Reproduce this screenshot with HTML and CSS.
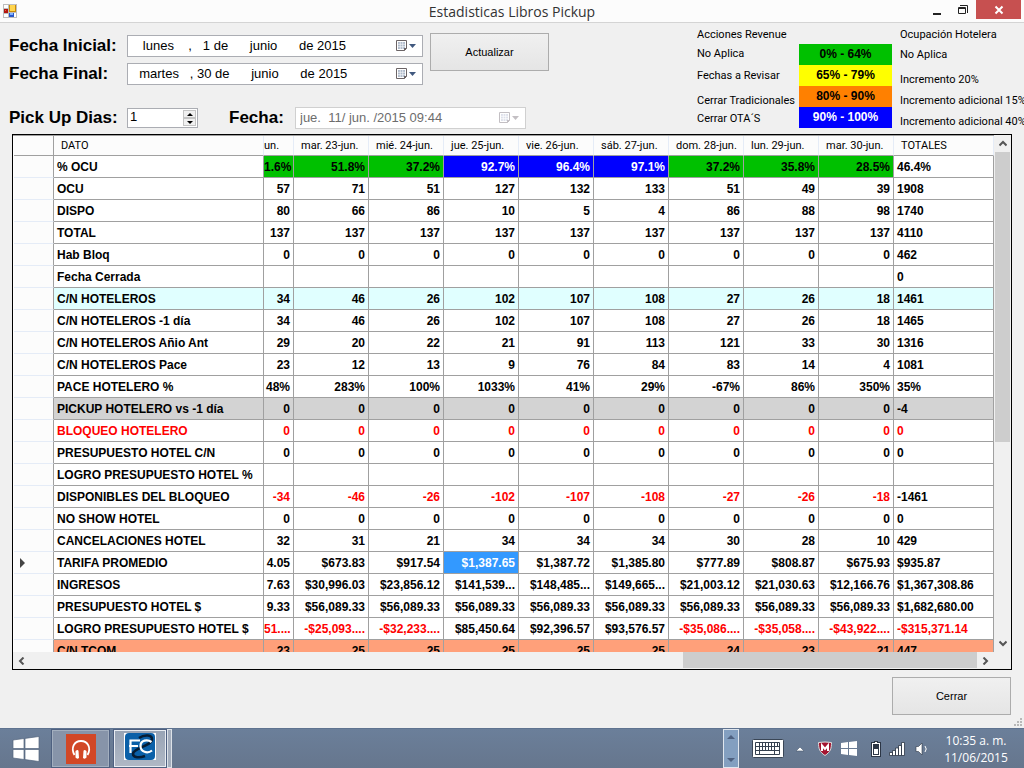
FILE: index.html
```html
<!DOCTYPE html>
<html lang="es">
<head>
<meta charset="utf-8">
<title>Estadisticas Libros Pickup</title>
<link rel="stylesheet" href="styles.css">
</head>
<body>
<header class="titlebar">
  <svg class="app-icon" width="14" height="14" viewBox="0 0 14 14"><path fill="#bdbdbd" d="M0 0h14v14H0z"/><path fill="#fff" d="M1 1h4v3H1zM1 10h4v3H1zM11 9h2v4h-2z"/><path fill="#b3160f" d="M1 5h4v4H1z"/><path fill="#f0604c" d="M2 6h1v1H2z"/><path fill="#c98a06" d="M6 1h7v7H6z"/><path fill="#ffd54f" d="M7 1h5v6H7z"/><path fill="#2856c8" d="M6 9h5v4H6z"/><path fill="#7fb0ff" d="M7 9h3v2H7z"/></svg>
  <h1 class="title">Estadisticas Libros Pickup</h1>
  <div class="window-controls">
    <button class="wc" aria-label="Minimizar"><svg width="10" height="12" viewBox="0 0 10 12"><path fill="#222" d="M1 9h8v2H1z"/></svg></button>
    <button class="wc" aria-label="Restaurar"><svg width="10" height="12" viewBox="0 0 10 12"><path fill="none" stroke="#222" d="M2 1.500h7.500V9M.5 3.500h7v6h-7zM.5 4.500h7"/></svg></button>
    <button class="wc wc-close" aria-label="Cerrar ventana"><svg width="10" height="10" viewBox="0 0 10 10"><path stroke="#fff" stroke-width="2" d="M1.500 1.500l7 7M8.500 1.500l-7 7"/></svg></button>
  </div>
</header>

<main class="window">
  <section class="top">
    <form class="filters">
      <div class="dates">
        <label class="lbl" for="ini">Fecha Inicial:</label>
        <div class="picker"><input id="ini" type="text" value="   lunes    ,   1 de      junio      de 2015"><button type="button" class="cal" aria-label="Calendario"><svg width="22" height="14" viewBox="0 0 22 14"><path fill="#fff" stroke="#6b6466" d="M1.500 1.500h10v8l-2 2h-8z"/><path fill="#aebaca" d="M3 3h7v7H3z"/><path stroke="#f4f6f8" stroke-width=".7" d="M3 5.300h7M3 7.700h7M5.300 3v7M7.700 3v7"/><path fill="#6b6466" d="M12 9l-3 3V9z"/><path fill="#41597f" d="M14 5h7l-3.500 4z"/></svg></button></div>
        <label class="lbl" for="fin">Fecha Final:</label>
        <div class="picker"><input id="fin" type="text" value="  martes   , 30 de      junio      de 2015"><button type="button" class="cal" aria-label="Calendario"><svg width="22" height="14" viewBox="0 0 22 14"><path fill="#fff" stroke="#6b6466" d="M1.500 1.500h10v8l-2 2h-8z"/><path fill="#aebaca" d="M3 3h7v7H3z"/><path stroke="#f4f6f8" stroke-width=".7" d="M3 5.300h7M3 7.700h7M5.300 3v7M7.700 3v7"/><path fill="#6b6466" d="M12 9l-3 3V9z"/><path fill="#41597f" d="M14 5h7l-3.500 4z"/></svg></button></div>
      </div>
      <button type="button" class="btn">Actualizar</button>
      <div class="pickup">
        <label class="lbl" for="dias">Pick Up Dias:</label>
        <div class="spin"><input id="dias" type="text" value="1"><div class="arrows"><button type="button" aria-label="Más"><svg width="6" height="3" viewBox="0 0 6 3"><path d="M0 3h6L3 0z"/></svg></button><button type="button" aria-label="Menos"><svg width="6" height="3" viewBox="0 0 6 3"><path d="M0 0h6L3 3z"/></svg></button></div></div>
        <label class="lbl lbl-fecha" for="fecha">Fecha:</label>
        <div class="picker picker-off"><input id="fecha" type="text" disabled value="jue.  11/ jun. /2015 09:44"><button type="button" class="cal" disabled aria-label="Calendario"><svg width="22" height="14" viewBox="0 0 22 14"><path fill="#fff" stroke="#c3bfc3" d="M1.500 1.500h10v8l-2 2h-8z"/><path fill="#dde0ea" d="M3 3h7v7H3z"/><path stroke="#fff" stroke-width=".7" d="M3 5.300h7M3 7.700h7M5.300 3v7M7.700 3v7"/><path fill="#c3bfc3" d="M12 9l-3 3V9zM14 5h7l-3.500 4z"/></svg></button></div>
      </div>
    </form>
    <div class="legend">
      <div class="leg-col leg-left"><span>Acciones Revenue</span><span>No Aplica</span><span>Fechas a Revisar</span><span>Cerrar Tradicionales</span><span>Cerrar OTA´S</span></div>
      <div class="ranges"><span class="green">0% - 64%</span><span class="yellow">65% - 79%</span><span class="orange">80% - 90%</span><span class="blue">90% - 100%</span></div>
      <div class="leg-col leg-right"><span>Ocupación Hotelera</span><span>No Aplica</span><span>Incremento 20%</span><span>Incremento adicional 15%</span><span>Incremento adicional 40%</span></div>
    </div>
  </section>

  <section class="grid">
    <div class="viewport">
      <table>
        <colgroup><col class="c-head"><col class="c-dato"><col class="c-part"><col span="8"><col class="c-total"></colgroup>
        <thead><tr><th></th><th>DATO</th><th>un.</th><th>mar. 23-jun.</th><th>mié. 24-jun.</th><th>jue. 25-jun.</th><th>vie. 26-jun.</th><th>sáb. 27-jun.</th><th>dom. 28-jun.</th><th>lun. 29-jun.</th><th>mar. 30-jun.</th><th>TOTALES</th></tr></thead>
        <tbody>
        <tr><th></th><td>% OCU</td><td class="green">1.6%</td><td class="green">51.8%</td><td class="green">37.2%</td><td class="blue">92.7%</td><td class="blue">96.4%</td><td class="blue">97.1%</td><td class="green">37.2%</td><td class="green">35.8%</td><td class="green">28.5%</td><td>46.4%</td></tr>
        <tr><th></th><td>OCU</td><td>57</td><td>71</td><td>51</td><td>127</td><td>132</td><td>133</td><td>51</td><td>49</td><td>39</td><td>1908</td></tr>
        <tr><th></th><td>DISPO</td><td>80</td><td>66</td><td>86</td><td>10</td><td>5</td><td>4</td><td>86</td><td>88</td><td>98</td><td>1740</td></tr>
        <tr><th></th><td>TOTAL</td><td>137</td><td>137</td><td>137</td><td>137</td><td>137</td><td>137</td><td>137</td><td>137</td><td>137</td><td>4110</td></tr>
        <tr><th></th><td>Hab Bloq</td><td>0</td><td>0</td><td>0</td><td>0</td><td>0</td><td>0</td><td>0</td><td>0</td><td>0</td><td>462</td></tr>
        <tr><th></th><td>Fecha Cerrada</td><td></td><td></td><td></td><td></td><td></td><td></td><td></td><td></td><td></td><td>0</td></tr>
        <tr class="cyan"><th></th><td>C/N HOTELEROS</td><td>34</td><td>46</td><td>26</td><td>102</td><td>107</td><td>108</td><td>27</td><td>26</td><td>18</td><td>1461</td></tr>
        <tr><th></th><td>C/N HOTELEROS -1 día</td><td>34</td><td>46</td><td>26</td><td>102</td><td>107</td><td>108</td><td>27</td><td>26</td><td>18</td><td>1465</td></tr>
        <tr><th></th><td>C/N HOTELEROS Añio Ant</td><td>29</td><td>20</td><td>22</td><td>21</td><td>91</td><td>113</td><td>121</td><td>33</td><td>30</td><td>1316</td></tr>
        <tr><th></th><td>C/N HOTELEROS Pace</td><td>23</td><td>12</td><td>13</td><td>9</td><td>76</td><td>84</td><td>83</td><td>14</td><td>4</td><td>1081</td></tr>
        <tr><th></th><td>PACE HOTELERO %</td><td>48%</td><td>283%</td><td>100%</td><td>1033%</td><td>41%</td><td>29%</td><td>-67%</td><td>86%</td><td>350%</td><td>35%</td></tr>
        <tr class="gray"><th></th><td>PICKUP HOTELERO vs -1 día</td><td>0</td><td>0</td><td>0</td><td>0</td><td>0</td><td>0</td><td>0</td><td>0</td><td>0</td><td>-4</td></tr>
        <tr class="red"><th></th><td>BLOQUEO HOTELERO</td><td>0</td><td>0</td><td>0</td><td>0</td><td>0</td><td>0</td><td>0</td><td>0</td><td>0</td><td>0</td></tr>
        <tr><th></th><td>PRESUPUESTO HOTEL C/N</td><td>0</td><td>0</td><td>0</td><td>0</td><td>0</td><td>0</td><td>0</td><td>0</td><td>0</td><td>0</td></tr>
        <tr><th></th><td>LOGRO PRESUPUESTO HOTEL %</td><td></td><td></td><td></td><td></td><td></td><td></td><td></td><td></td><td></td><td></td></tr>
        <tr><th></th><td>DISPONIBLES DEL BLOQUEO</td><td class="red">-34</td><td class="red">-46</td><td class="red">-26</td><td class="red">-102</td><td class="red">-107</td><td class="red">-108</td><td class="red">-27</td><td class="red">-26</td><td class="red">-18</td><td>-1461</td></tr>
        <tr><th></th><td>NO SHOW HOTEL</td><td>0</td><td>0</td><td>0</td><td>0</td><td>0</td><td>0</td><td>0</td><td>0</td><td>0</td><td>0</td></tr>
        <tr><th></th><td>CANCELACIONES HOTEL</td><td>32</td><td>31</td><td>21</td><td>34</td><td>34</td><td>34</td><td>30</td><td>28</td><td>10</td><td>429</td></tr>
        <tr><th><svg width="5" height="10" viewBox="0 0 5 10"><path fill="#444" d="M0 0v10l5-5z"/></svg></th><td>TARIFA PROMEDIO</td><td>4.05</td><td>$673.83</td><td>$917.54</td><td class="selected">$1,387.65</td><td>$1,387.72</td><td>$1,385.80</td><td>$777.89</td><td>$808.87</td><td>$675.93</td><td>$935.87</td></tr>
        <tr><th></th><td>INGRESOS</td><td>7.63</td><td>$30,996.03</td><td>$23,856.12</td><td>$141,539...</td><td>$148,485...</td><td>$149,665...</td><td>$21,003.12</td><td>$21,030.63</td><td>$12,166.76</td><td>$1,367,308.86</td></tr>
        <tr><th></th><td>PRESUPUESTO HOTEL $</td><td>9.33</td><td>$56,089.33</td><td>$56,089.33</td><td>$56,089.33</td><td>$56,089.33</td><td>$56,089.33</td><td>$56,089.33</td><td>$56,089.33</td><td>$56,089.33</td><td>$1,682,680.00</td></tr>
        <tr><th></th><td>LOGRO PRESUPUESTO HOTEL $</td><td class="red">51....</td><td class="red">-$25,093....</td><td class="red">-$32,233....</td><td>$85,450.64</td><td>$92,396.57</td><td>$93,576.57</td><td class="red">-$35,086....</td><td class="red">-$35,058....</td><td class="red">-$43,922....</td><td class="red">-$315,371.14</td></tr>
        <tr class="salmon"><th></th><td>C/N TCOM</td><td>23</td><td>25</td><td>25</td><td>25</td><td>25</td><td>25</td><td>24</td><td>23</td><td>21</td><td>447</td></tr>
        </tbody>
      </table>
    </div>
    <div class="vscroll"><button aria-label="Arriba"><svg width="8" height="7" viewBox="0 0 8 7"><path fill="none" stroke="#555" stroke-width="2" d="M0.500 5.500L4 2l3.500 3.500"/></svg></button><div class="vtrack"><div class="vthumb"></div></div><button aria-label="Abajo"><svg width="8" height="7" viewBox="0 0 8 7"><path fill="none" stroke="#555" stroke-width="2" d="M0.500 1.500L4 5l3.500-3.500"/></svg></button></div>
    <div class="hscroll"><button aria-label="Izquierda"><svg width="7" height="8" viewBox="0 0 7 8"><path fill="none" stroke="#555" stroke-width="2" d="M5.500 .5L2 4l3.500 3.500"/></svg></button><div class="htrack"><div class="hthumb"></div></div><button aria-label="Derecha"><svg width="7" height="8" viewBox="0 0 7 8"><path fill="none" stroke="#555" stroke-width="2" d="M1.500 .5L5 4 1.500 7.500"/></svg></button></div>
  </section>

  <footer class="bottom"><button class="btn">Cerrar</button>
    <svg class="grip" width="8" height="8" viewBox="0 0 8 8"><path fill="#b8b8b8" d="M6 0h2v2H6zM3 3h2v2H3zM6 3h2v2H6zM0 6h2v2H0zM3 6h2v2H3zM6 6h2v2H6z"/></svg>
  </footer>
</main>

<nav class="taskbar">
  <button class="start" aria-label="Inicio"><svg width="28" height="26" viewBox="0 0 28 26"><path fill="#fff" stroke="#53647c" stroke-width=".7" d="M1 4L12 2.500V12.500H1zM13 2.400L27 .5v12H13zM1 13.500h11V23.500L1 22zM13 13.500h14V25.500l-14-1.900z"/></svg></button>
  <button class="task" aria-label="Audio"><svg width="30" height="30" viewBox="0 0 30 30"><path fill="#d24726" d="M0 0h30v30H0z"/><path fill="none" stroke="#fff" stroke-width="1.800" d="M8.500 21C4.500 14 8 7 15 7s10.500 7 6.500 14"/><path fill="#fff" d="M9.500 17q2.500-2 3 0l.5 7q-2 1.500-3.500-.5zM20.500 17q-2.500-2-3 0l-.5 7q2 1.500 3.500-.5z"/></svg></button>
  <button class="task task-on" aria-label="FC"><svg width="32" height="27" viewBox="0 0 32 27"><path fill="#fff" d="M0 0h32v27H0z"/><rect x="1" width="30" height="27" rx="4" fill="#0a60a8"/><path fill="none" stroke="#061c33" stroke-width="2.500" d="M15 5c6-4 13-3 13 1 0 7-19 9-19 15 0 4 7 4 12 2"/><path fill="none" stroke="#fff" stroke-width="2.200" d="M6.500 20V7.500H16M5 13h9M27.500 9c-4-3-11-2-11 4s7 8 11.500 4.500"/></svg></button>
  <div class="task-more"></div>
  <div class="tray">
    <div class="tray-scroll"><svg width="8" height="4" viewBox="0 0 8 4"><path fill="#4e6180" d="M0 4h8L4 0z"/></svg><svg width="8" height="4" viewBox="0 0 8 4"><path fill="#4e6180" d="M0 0h8L4 4z"/></svg></div>
    <svg class="kbd" width="32" height="19" viewBox="0 0 32 19"><rect x=".5" y=".5" width="31" height="18" rx="1" fill="#fff" stroke="#3a4656"/><path fill="none" stroke="#35404f" d="M3.500 3.500h24v12h-24zM3.500 7.500h24M3.500 11.500h24M7.500 3.500v12M10.500 3.500v8M13.500 3.500v8M16.500 3.500v8M19.500 3.500v8M22.500 3.500v12M25.500 3.500v4"/></svg>
    <svg class="up" width="10" height="6" viewBox="0 0 10 6"><path fill="#fff" stroke="#4a5a70" stroke-width=".6" d="M1 5h8L5 1z"/></svg>
    <svg class="shield" width="14" height="15" viewBox="0 0 14 15"><path fill="#a31430" stroke="#ddd" d="M.5 1.500L7 1l6.500.5c0 6-1 9.500-6.500 13C1.500 11 .5 7.500.5 1.500z"/><path fill="none" stroke="#fff" stroke-width="2" d="M4 10V4.500L7 8l3-3.500V10"/></svg>
    <svg class="win" width="16" height="15" viewBox="0 0 16 15"><path fill="#fff" d="M0 2l7-1v6H0zM8 1l8-1v7H8zM0 8h7v6l-7-1zM8 8h8v7l-8-1z"/></svg>
    <svg class="bat" width="10" height="16" viewBox="0 0 10 16"><path fill="#2c3645" d="M3 0h4v1h3v15H0V1h3z"/><path fill="#fff" d="M4 1h2v1h3v13H1V2h3z"/><path fill="#2c3645" d="M2 3h6v11H2z"/><path fill="#fff" d="M3 8h4v5H3z"/></svg>
    <svg class="sig" width="16" height="14" viewBox="0 0 16 14"><path fill="#fff" stroke="#2c3645" stroke-width=".8" d="M.5 10.500h3v3h-3zM3.500 8.500h3v5h-3zM6.500 6h3v7.500h-3zM9.500 3.500h3v10h-3zM12.500 .5h3v13h-3z"/></svg>
    <svg class="vol" width="13" height="14" viewBox="0 0 13 14"><path fill="#fff" stroke="#2c3645" stroke-width=".6" d="M1 4.500h2.500L7 1v12L3.500 9.500H1z"/><path fill="none" stroke="#fff" d="M10 4q2.500 3 0 6"/></svg>
    <div class="clock"><span>10:35 a. m.</span><span>11/06/2015</span></div>
  </div>
</nav>
</body>
</html>
```
FILE: styles.css
```css
* { box-sizing: border-box; }
html, body { height: 100%; }
body { margin: 0; display: flex; flex-direction: column; background: #f0f0f0; color: #000; font: 12px/14px "Liberation Sans", Arial, sans-serif; overflow: hidden; }
button, input { font: inherit; color: inherit; margin: 0; padding: 0; }
button { border: 0; background: none; display: flex; align-items: center; justify-content: center; }
svg { display: block; flex: none; }

.titlebar { height: 23px; flex: none; display: grid; grid-template-columns: 1fr auto 1fr; align-items: start; background: #fcfcfc; border-bottom: 1px solid #d4d4d4; }
.app-icon { margin: 4px 0 0 3px; }
.title { margin: 0; font: 14px/23px "Open Sans", sans-serif; color: #333; }
.window-controls { display: flex; justify-content: flex-end; height: 19px; padding-right: 3px; }
.wc { width: 26px; }
.wc-close { width: 45px; background: #c75050; }

.window { flex: 1; min-height: 0; display: flex; flex-direction: column; padding: 4px 0 0; }
.top { display: flex; justify-content: space-between; height: 107px; flex: none; }
.filters { display: grid; grid-template-columns: auto auto; grid-template-rows: 57px auto; column-gap: 7px; row-gap: 15px; justify-content: start; padding: 8px 0 0 9px; }
.dates { display: grid; grid-template-columns: 118px 296px; row-gap: 6px; align-items: center; height: 50px; }
.lbl { font-size: 17px; line-height: 22px; font-weight: 700; white-space: nowrap; }
.picker { display: flex; align-items: center; height: 22px; background: #fff; border: 1px solid #abadb3; padding: 0 5px 0 4px; }
.picker input { flex: 1; min-width: 0; border: 0; background: none; font-size: 13px; outline: 0; white-space: pre; }
.picker-off { width: 231px; border-color: #d0d0d0; color: #6d6d6d; }
.btn { width: 119px; height: 38px; border: 1px solid #acacac; background: linear-gradient(#f0f0f0, #e5e5e5); font-size: 11px; }
.filters .btn { margin-top: -2px; }
.pickup { grid-column: 1 / 3; display: flex; align-items: center; height: 22px; }
.pickup .lbl { width: 118px; }
.pickup .lbl-fecha { width: 66px; margin-left: 31px; }
.spin { display: flex; width: 71px; height: 20px; background: #fff; border: 1px solid #abadb3; }
.spin input { flex: 1; min-width: 0; border: 0; background: none; padding: 0 2px 2px; font-size: 13px; }
.arrows { width: 15px; display: flex; flex-direction: column; padding: 1px; }
.arrows button { flex: 1; background: #f0f0f0; border: 1px solid #c4c4c4; }

.legend { display: flex; font-size: 11px; }
.leg-col { display: grid; white-space: nowrap; align-items: center; height: 102px; font-family: Roboto, "Liberation Sans", sans-serif; }
.leg-left { width: 102px; grid-template-rows: 16px 22px 22px 27px 10px; }
.leg-right { width: 132px; padding-left: 8px; grid-template-rows: 16px 24px 26px 16px 25px; }
.ranges { width: 93px; margin-top: 17px; display: flex; flex-direction: column; font-size: 12px; font-weight: 700; text-align: center; }
.ranges span { height: 21px; line-height: 21px; }
.green { background: #00c000; }
.yellow { background: #ff0; }
.orange { background: #ff8000; }
.blue { background: #00f; color: #fff; }

.grid { flex: 1; min-height: 0; margin: 0 12px; border: 1px solid #000; display: grid; grid-template-columns: 1fr 17px; grid-template-rows: 1fr 17px; }
.viewport { overflow: hidden; min-width: 0; min-height: 0; padding-left: 1px; background: #fff; border-top: 1px solid #a0a0a0; }
table { width: 100%; table-layout: fixed; border-collapse: separate; border-spacing: 0; }
.c-head { width: 40px; }
.c-dato { width: 210px; }
.c-part { width: 30px; }
.c-total { width: 100px; }
th, td { height: 22px; padding: 0 3px 0 0; border-right: 1px solid #a0a0a0; border-bottom: 1px solid #a0a0a0; overflow: hidden; white-space: nowrap; text-align: right; font-weight: 700; }
thead th { height: 20px; background: #fcfcfc; font-family: Roboto, "Liberation Sans", sans-serif; font-size: 11px; font-weight: 400; text-align: left; padding: 0 0 0 7px; border-right-color: #e5ecf7; }
thead th:nth-child(3) { padding-left: 0; }
thead th:first-child, tbody th { border-right-color: #a0a0a0; }
tbody th { background: #fcfcfc; border-bottom-color: #e5ecf7; padding: 0 0 0 6px; }
td:nth-child(2), td:last-child { text-align: left; padding: 0 0 0 3px; }
.cyan td { background: #e0ffff; }
.gray td { background: #d3d3d3; }
.salmon td { background: #ffa07a; }
.red, .red td { color: #f00; }
.selected { background: #39f; color: #fff; }

.vscroll { display: flex; flex-direction: column; background: #f0f0f0; }
.vscroll button { height: 17px; }
.vtrack { flex: 1; }
.vthumb { height: 60%; margin: 0 1px; background: #cdcdcd; }
.hscroll { display: flex; }
.hscroll button { width: 17px; }
.htrack { flex: 1; display: flex; justify-content: flex-end; padding: 0 0 1px; }
.hthumb { width: 31%; background: #cdcdcd; }

.bottom { height: 58px; flex: none; padding: 7px 2px 2px 0; display: flex; justify-content: flex-end; align-items: flex-start; gap: 3px; }
.grip { align-self: flex-end; }

.taskbar { height: 40px; flex: none; display: flex; background: linear-gradient(#6b7f9a, #66768d); border-top: 1px solid #5f7390; color: #fff; }
.start { width: 51px; }
.task { width: 59px; border: 1px solid #4e6080; background: #8794a9; box-shadow: inset 0 0 0 1px #a3afbf; margin-right: 3px; }
.task-on { width: 54px; margin: 0; padding-bottom: 5px; background: linear-gradient(#98a4b5, #b0b8c5); box-shadow: inset 0 0 0 1px #e8ecf1; }
.task-more { width: 5px; background: #a4aebd; border: 1px solid #dde2e8; }
.tray { margin-left: auto; display: flex; align-items: center; }
.tray-scroll { width: 16px; height: 39px; background: #839fc0; border: 1px solid #dfe6ee; display: flex; flex-direction: column; justify-content: space-between; align-items: center; padding: 5px 0; }
.kbd { margin-left: 13px; }
.up { margin-left: 11px; }
.shield { margin-left: 13px; }
.win { margin-left: 9px; }
.bat { margin-left: 14px; }
.sig { margin-left: 8px; }
.vol { margin-left: 10px; }
.clock { width: 96px; display: flex; flex-direction: column; text-align: center; font: 12px/17px "Open Sans", sans-serif; }
```
